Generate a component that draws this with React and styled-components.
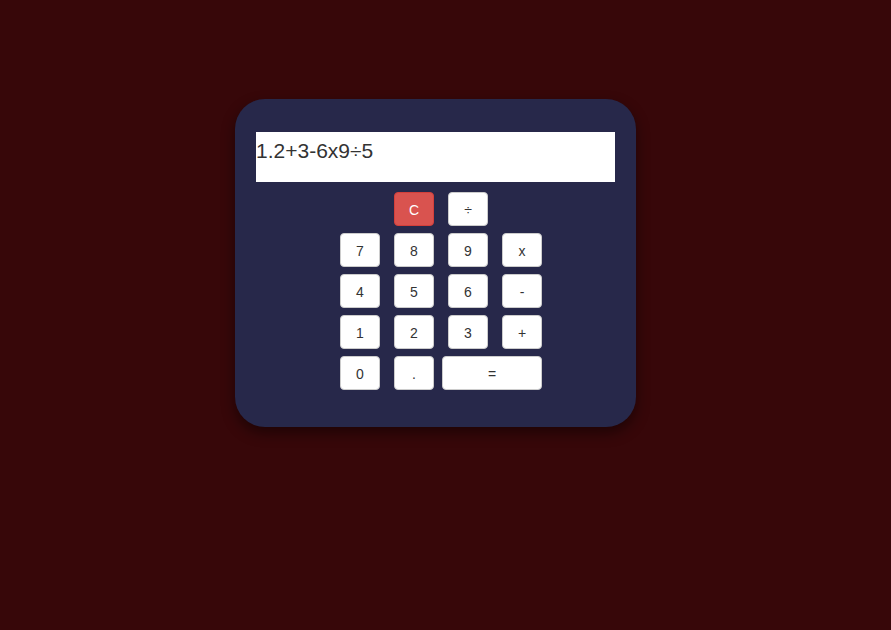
import React from 'react';
import styled, { createGlobalStyle } from 'styled-components';

const GlobalStyle = createGlobalStyle`
  body {
    margin: 0;
    background-color: #370709;
    font-family: 'Liberation Sans', Arial, sans-serif;
  }
`;

const Page = styled.div`
  min-height: 630px;
  padding-top: 99px;
  box-sizing: border-box;
`;

const Calculator = styled.div`
  width: 401px;
  height: 328px;
  margin-left: 235px;
  box-sizing: border-box;
  padding: 33px 21px 0;
  background-color: #27284a;
  border-radius: 30px;
  box-shadow: 0 6px 14px rgba(0, 0, 0, 0.45);
`;

const Display = styled.div`
  height: 50px;
  box-sizing: border-box;
  padding-top: 7px;
  background-color: #fff;
  color: #333;
  font-size: 21px;
  line-height: 24px;
`;

const Keypad = styled.div`
  display: flex;
  flex-direction: column;
  gap: 7px;
  margin-top: 10px;
  padding-left: 11px;
`;

const Row = styled.div`
  display: flex;
  justify-content: center;
  gap: 14px;
`;

const Key = styled.button`
  width: ${(p) => (p.$wide ? '100px' : '40px')};
  height: 34px;
  margin-left: ${(p) => (p.$wide ? '-6px' : '0')};
  padding: 1px 0 0;
  border: 1px solid ${(p) => (p.$danger ? '#d43f3a' : '#ccc')};
  border-radius: 4px;
  background-color: ${(p) => (p.$danger ? '#d9534f' : '#fff')};
  color: ${(p) => (p.$danger ? '#fff' : '#333')};
  font-family: 'Liberation Sans', Arial, sans-serif;
  font-size: 14px;
  cursor: pointer;
`;

const rows = [
  ['7', '8', '9', 'x'],
  ['4', '5', '6', '-'],
  ['1', '2', '3', '+'],
];

const App = () => {
  return (
    <Page>
      <GlobalStyle />
      <Calculator>
        <Display>1.2+3-6x9÷5</Display>
        <Keypad>
          <Row>
            <Key $danger>C</Key>
            <Key>÷</Key>
          </Row>
          {rows.map((row) => (
            <Row key={row.join('')}>
              {row.map((k) => (
                <Key key={k}>{k}</Key>
              ))}
            </Row>
          ))}
          <Row>
            <Key>0</Key>
            <Key>.</Key>
            <Key $wide>=</Key>
          </Row>
        </Keypad>
      </Calculator>
    </Page>
  );
};

export default App;
